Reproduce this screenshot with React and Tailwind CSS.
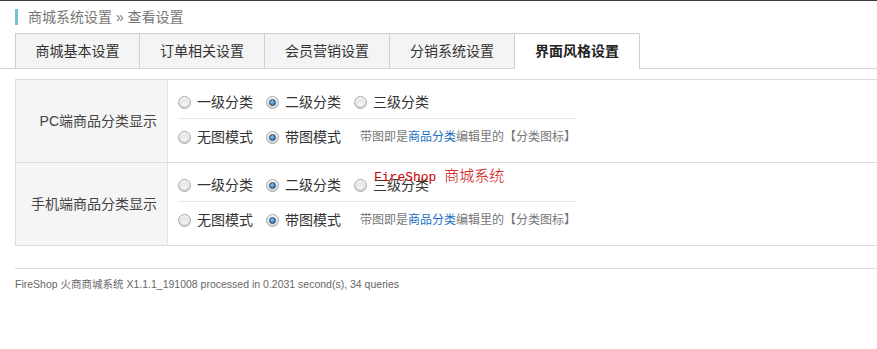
import React from "react";

const FONT = { fontFamily: '"Liberation Sans", Arial, "Noto Sans CJK SC", sans-serif' };

function Radio({ checked }) {
  return (
    <span className="inline-flex w-[13px] h-[13px] shrink-0 items-center justify-center rounded-full border border-[#a8a8a8] bg-linear-to-b from-[#f6f6f6] to-[#d6d6d6]">
      {checked ? (
        <span className="w-[7px] h-[7px] rounded-full border border-[#1d4f7a] bg-[radial-gradient(circle_at_40%_35%,#8cc0ea,#1f5f96)]" />
      ) : (
        <span className="w-[7px] h-[7px] rounded-full bg-linear-to-b from-[#e2e2e2] to-[#f8f8f8]" />
      )}
    </span>
  );
}

function Opt({ checked, label }) {
  return (
    <span className="flex items-center w-[88px]">
      <Radio checked={checked} />
      <span className="ml-[6px] text-[14px] text-[#333] whitespace-nowrap">{label}</span>
    </span>
  );
}

function Hint() {
  return (
    <span className="ml-[6px] text-[12px] text-[#777] whitespace-nowrap">
      带图即是<span className="text-[#1a6fc4]">商品分类</span>编辑里的【分类图标】
    </span>
  );
}

function Row({ label, last }) {
  return (
    <div className={`flex ${last ? "" : "border-b border-[#dcdcdc]"}`}>
      <div className="w-[152px] shrink-0 bg-[#f5f5f5] border-r border-[#e2e2e2] flex items-center justify-end pr-[10px] text-[14px] text-[#444]">
        {label}
      </div>
      <div className="pl-[10px] pt-[7px] pb-[7px]">
        <div className="w-[399px] h-[32px] flex items-center border-b border-[#e8e8e8]">
          <Opt checked={false} label="一级分类" />
          <Opt checked={true} label="二级分类" />
          <Opt checked={false} label="三级分类" />
        </div>
        <div className="h-[36px] flex items-center">
          <Opt checked={false} label="无图模式" />
          <Opt checked={true} label="带图模式" />
          <Hint />
        </div>
      </div>
    </div>
  );
}

export default function App() {
  const tabs = ["商城基本设置", "订单相关设置", "会员营销设置", "分销系统设置", "界面风格设置"];
  return (
    <div className="relative w-[877px] h-[349px] overflow-hidden bg-white border-t border-[#3a3a3a]" style={FONT}>
      {/* breadcrumb */}
      <div className="flex items-center h-[32px] pl-[15px]">
        <span className="w-[3px] h-[16px] bg-[#74c2d2]" />
        <span className="ml-[10px] text-[14px] text-[#777]">商城系统设置 » 查看设置</span>
      </div>
      {/* tabs */}
      <div className="flex pl-[15px] border-b border-[#d4d4d4]">
        {tabs.map((t, i) => {
          const active = i === tabs.length - 1;
          return (
            <div
              key={t}
              className={`w-[125px] h-[35px] flex items-center justify-center text-[14px] border-t border-r border-[#cfcfcf] ${i === 0 ? "border-l" : ""} ${
                active ? "bg-white font-bold text-[#222] -mb-px h-[36px]" : "bg-[#f4f4f4] text-[#333]"
              }`}
            >
              {t}
            </div>
          );
        })}
      </div>
      {/* table */}
      <div className="mt-[10px] ml-[15px] w-[900px] border border-[#dcdcdc]">
        <Row label="PC端商品分类显示" />
        <Row label="手机端商品分类显示" last />
      </div>
      {/* watermark */}
      <div className="absolute left-[374px] top-[164px] leading-[20px] text-[#cc0000] whitespace-nowrap">
        <span className="text-[13px]" style={{ fontFamily: '"Liberation Mono", monospace' }}>FireShop </span>
        <span className="text-[15px] font-light" style={{ fontFamily: '"Noto Sans CJK SC", sans-serif' }}>商城系统</span>
      </div>
      {/* footer */}
      <div className="mt-[22px] ml-[15px] border-t border-[#dcdcdc] pt-[8px] text-[10.5px] text-[#666] whitespace-nowrap">
        FireShop 火商商城系统 X1.1.1_191008 processed in 0.2031 second(s), 34 queries
      </div>
    </div>
  );
}
